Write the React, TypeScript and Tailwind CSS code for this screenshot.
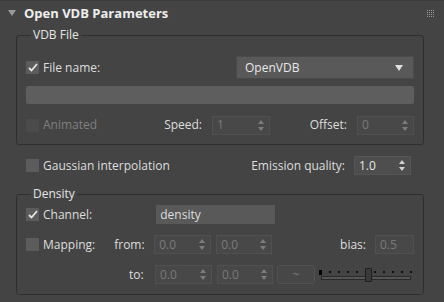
import React from 'react';

const Check = ({ checked, disabled }: { checked?: boolean; disabled?: boolean }) => (
  <span
    className={`flex h-[13px] w-[13px] shrink-0 items-center justify-center ${disabled ? 'bg-[#4b4b4b]' : 'bg-[#5c5c5c]'}`}
  >
    {checked && (
      <svg width="10" height="9" viewBox="0 0 10 9">
        <path d="M1 5 L3.5 7.5 L9 1" stroke="#e6e6e6" strokeWidth="1.8" fill="none" />
      </svg>
    )}
  </span>
);

const SpinArrows = ({ light }: { light?: boolean }) => (
  <svg width="6" height="11" viewBox="0 0 6 11" className="shrink-0">
    <path d="M0 4 L3 0 L6 4 Z" fill={light ? '#d0d0d0' : '#7c7c7c'} />
    <path d="M0 7 L3 11 L6 7 Z" fill={light ? '#d0d0d0' : '#7c7c7c'} />
  </svg>
);

const Spinner = ({ value, w, enabled }: { value: string; w: string; enabled?: boolean }) => (
  <div
    className={`flex h-[19px] items-center justify-between border pl-[4px] pr-[5px] ${w} ${
      enabled ? 'border-[#555555] bg-[#4e4e4e] text-[#e8e8e8]' : 'border-[#505050] bg-[#484848] text-[#7a7a7a]'
    }`}
  >
    <span>{value}</span>
    <SpinArrows light={enabled} />
  </div>
);

const Slider = () => (
  <div className="flex w-[93px] flex-col">
    <div className="flex h-[6px] items-center justify-between">
      <span className="h-[5px] w-[3px] bg-black" />
      {Array.from({ length: 10 }).map((_, i) => (
        <span key={i} className="h-[2px] w-[2px] bg-[#111111]" />
      ))}
    </div>
    <div className="relative mt-[1px] ml-[2px] h-[4px] w-[90px] border border-[#2a2a2a] bg-[#555555]">
      <span className="absolute left-[43px] top-[-9px] h-[14px] w-[7px] rounded-[1px] border border-[#1e1e1e] bg-[#3a3a3a]" />
    </div>
  </div>
);

export default function App() {
  return (
    <div
      className="h-[302px] w-[444px] overflow-hidden border-t border-[#3a3a3a] bg-[#444444] text-[12px] leading-[16px] text-[#dedede]"
      style={{ fontFamily: '"Open Sans", "Noto Sans", sans-serif' }}
    >
      {/* header */}
      <div className="flex h-[26px] items-center pl-[8px] pr-[10px] pb-[2px]">
        <svg width="8" height="6" viewBox="0 0 8 6" className="mr-[8px]">
          <path d="M0 0 L8 0 L4 6 Z" fill="#9a9a9a" />
        </svg>
        <span className="text-[13px] font-bold text-[#eeeeee]">Open VDB Parameters</span>
        <div className="ml-auto grid grid-cols-4 gap-[1px]">
          {Array.from({ length: 16 }).map((_, i) => (
            <span key={i} className="h-[1px] w-[1px] bg-[#9a9a9a]" />
          ))}
        </div>
      </div>

      <div className="pl-[16px] pr-[20px]">
        {/* VDB File */}
        <fieldset className="rounded-[3px] border border-[#2f2f2f] pb-[10px] pl-[9px] pr-[9px]">
          <legend className="ml-[5px] px-[2px] text-[#e4e4e4]">VDB File</legend>
          <div className="mt-[13px] flex h-[23px] items-center">
            <Check checked />
            <span className="ml-[4px]">File name:</span>
            <div className="ml-auto flex h-[23px] w-[178px] items-center justify-between border border-[#4a4a4a] bg-[#595959] pl-[8px] pr-[10px] text-[#e8e8e8]">
              <span>OpenVDB</span>
              <svg width="8" height="6" viewBox="0 0 8 6">
                <path d="M0 0 L8 0 L4 6 Z" fill="#e0e0e0" />
              </svg>
            </div>
          </div>
          <div className="mt-[7px] h-[18px] rounded-[2px] bg-[#5e5e5e]" />
          <div className="mt-[12px] flex h-[18px] items-center">
            <Check disabled />
            <span className="ml-[4px] text-[#7f7f7f]">Animated</span>
            <span className="ml-[67px]">Speed:</span>
            <Spinner value="1" w="ml-[10px] w-[58px] h-[18px]" />
            <span className="ml-auto">Offset:</span>
            <Spinner value="0" w="ml-[10px] w-[57px] h-[18px]" />
          </div>
        </fieldset>

        {/* Gaussian */}
        <div className="mt-[11px] flex h-[19px] items-center pl-[10px] pr-[13px]">
          <Check />
          <span className="ml-[4px]">Gaussian interpolation</span>
          <span className="ml-auto">Emission quality:</span>
          <Spinner value="1.0" w="ml-[9px] w-[57px]" enabled />
        </div>

        {/* Density */}
        <fieldset className="mt-[11px] rounded-[3px] border border-[#2f2f2f] pb-[10px] pl-[9px] pr-[9px]">
          <legend className="ml-[5px] px-[2px] text-[#e4e4e4]">Density</legend>
          <div className="mt-[3px] flex h-[19px] items-center">
            <Check checked />
            <span className="ml-[4px]">Channel:</span>
            <div className="ml-[64px] flex h-[19px] w-[119px] items-center bg-[#595959] px-[4px] text-[#dddddd]">
              density
            </div>
          </div>
          <div className="mt-[11px] flex h-[19px] items-center">
            <Check />
            <span className="ml-[4px]">Mapping:</span>
            <span className="ml-[19px] w-[34px]">from:</span>
            <Spinner value="0.0" w="ml-[6px] w-[57px]" />
            <Spinner value="0.0" w="ml-[5px] w-[56px]" />
            <span className="ml-auto">bias:</span>
            <div className="ml-[9px] flex h-[19px] w-[39px] items-center border border-[#505050] bg-[#484848] px-[4px] text-[#7a7a7a]">
              0.5
            </div>
          </div>
          <div className="mt-[11px] flex h-[19px] items-center">
            <span className="ml-[103px] w-[20px]">to:</span>
            <Spinner value="0.0" w="ml-[6px] w-[57px]" />
            <Spinner value="0.0" w="ml-[5px] w-[56px]" />
            <div className="ml-[4px] flex h-[19px] w-[38px] items-center justify-center rounded-[3px] border border-[#525252] bg-[#474747] text-[#7a7a7a]">
              ~
            </div>
            <div className="ml-[4px]">
              <Slider />
            </div>
          </div>
        </fieldset>
      </div>
    </div>
  );
}
